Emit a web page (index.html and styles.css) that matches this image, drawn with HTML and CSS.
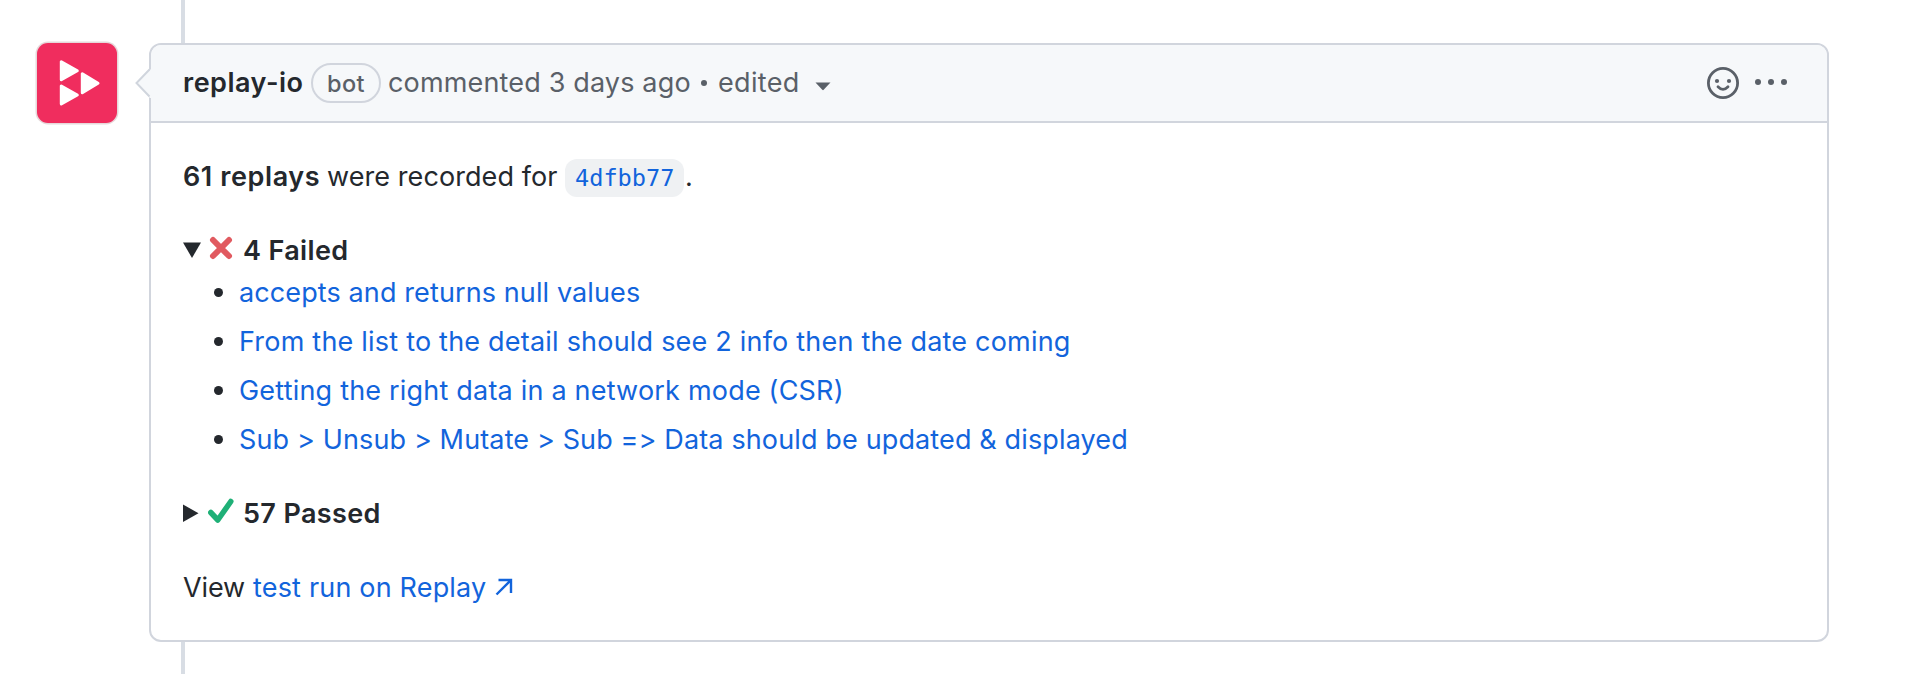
FILE: index.html
```html
<!DOCTYPE html>
<html lang="en">
<head>
<meta charset="utf-8">
<title>replay-io comment</title>
<link rel="stylesheet" href="styles.css">
</head>
<body>
<main class="timeline">
  <svg class="avatar" viewBox="0 0 84 84" aria-label="replay-io">
    <rect x="0.500" y="0.500" width="83" height="83" rx="12.500" fill="#e6d8da"/>
    <rect x="2" y="2" width="80" height="80" rx="11" fill="#f02d5e"/>
    <g fill="#fff" stroke="#fff" stroke-width="3" stroke-linejoin="round">
      <path d="M26.300 20.800v18l16-9z"/>
      <path d="M26.300 45v18l16-9z"/>
      <path d="M47.300 32.800v19l15.700-9.500z"/>
    </g>
  </svg>
  <article class="comment">
    <svg class="pointer" viewBox="0 0 17 30"><path d="M17 0v30h-2L1.500 15.500 15 2z" fill="#f6f8fa"/><path d="M14.500 1.500L1.500 15l13 13.500" fill="none" stroke="#d0d5dd" stroke-width="2"/></svg>
    <header class="comment-header">
      <strong class="author">replay-io</strong>
      <span class="badge">bot</span>
      <span class="meta">commented 3 days ago</span>
      <span class="dot"></span>
      <span class="edited">edited</span>
      <svg class="caret" viewBox="0 0 16 9"><path d="M.5 .5h15L8.700 7.800q-.7.700-1.400 0z" fill="#5a6068"/></svg>
      <div class="actions">
        <svg class="smiley" viewBox="0 0 32 32"><circle cx="16" cy="16" r="14.600" fill="none" stroke="#5a6068" stroke-width="2.800"/><circle cx="10" cy="14" r="2.100" fill="#5a6068"/><circle cx="22" cy="14" r="2.100" fill="#5a6068"/><path d="M11 19.800q5 5.200 10 0" fill="none" stroke="#5a6068" stroke-width="2.800" stroke-linecap="round"/></svg>
        <svg class="kebab" viewBox="0 0 32 8"><g fill="#5a6068"><circle cx="3" cy="4" r="3"/><circle cx="16" cy="4" r="3"/><circle cx="29" cy="4" r="3"/></g></svg>
      </div>
    </header>
    <div class="comment-body">
      <p class="line"><strong class="count">61 replays</strong> <span class="recorded">were recorded for</span> <code class="sha">4dfbb77</code><span class="stop">.</span></p>
      <section class="group">
        <div class="summary">
          <svg class="tri" viewBox="0 0 18 18"><path d="M0 1.500h18L9 17z" fill="#24282d"/></svg>
          <svg class="mark" viewBox="0 0 26 26"><path d="M5 5l16 16M21 5L5 21" stroke="#e15a60" stroke-width="6" stroke-linecap="round"/></svg>
          <strong class="failed">4 Failed</strong>
        </div>
        <ul class="list">
          <li><a class="t1">accepts and returns null values</a></li>
          <li><a class="t2">From the list to the detail should see 2 info then the date coming</a></li>
          <li><a class="t3">Getting the right data in a network mode (CSR)</a></li>
          <li><a class="t4">Sub &gt; Unsub &gt; Mutate &gt; Sub =&gt; Data should be updated &amp; displayed</a></li>
        </ul>
      </section>
      <section class="group">
        <div class="summary">
          <svg class="tri" viewBox="0 0 18 18"><path d="M0 .500v17.500l15.500-8.800z" fill="#24282d"/></svg>
          <svg class="mark" viewBox="0 0 26 26"><path d="M2.800 14.500L9.800 22 22.800 3.500" stroke="#1fb077" stroke-width="5.500" fill="none" stroke-linecap="round" stroke-linejoin="round"/></svg>
          <strong class="passed">57 Passed</strong>
        </div>
      </section>
      <p class="line"><span class="view">View</span> <a class="run">test run on Replay</a><svg class="arrow" viewBox="0 0 18 18"><path d="M1.500 16.500L16 2M3.500 2H16v13" fill="none" stroke="#1264dc" stroke-width="2.400"/></svg></p>
    </div>
  </article>
</main>
</body>
</html>
```
FILE: styles.css
```css
* { box-sizing: border-box; }
body {
  margin: 0;
  background: #fff;
  color: #24282d;
  font: 27px/42px Inter, "Liberation Sans", sans-serif;
}
svg { display: block; flex: none; }
strong { font-weight: 600; }
a { color: #1264dc; }
.timeline {
  display: flex;
  align-items: flex-start;
  gap: 30px;
  height: 674px;
  padding: 43px 79px 0 35px;
  overflow: hidden;
  background: linear-gradient(#d8dde4, #d8dde4) 181px 0 / 4px 100% no-repeat;
}
.avatar { width: 84px; height: 84px; margin-top: -2px; }
.comment {
  position: relative;
  flex: 1;
  height: 599px;
  border: 2px solid #d1d5dd;
  border-radius: 12px;
  background: #fff;
}
.pointer { position: absolute; left: -16px; top: 23px; width: 17px; height: 30px; }
.comment-header {
  display: flex;
  align-items: center;
  height: 78px;
  padding: 0 40px 0 32px;
  border-bottom: 2px solid #d1d5dd;
  border-radius: 10px 10px 0 0;
  background: #f6f8fa;
  color: #5a6068;
  white-space: nowrap;
}
.author { width: 128px; color: #24282d; letter-spacing: 0.500px; }
.badge {
  width: 70px;
  height: 40px;
  border: 2px solid #d1d5dd;
  border-radius: 20px;
  font-size: 23.500px;
  font-weight: 500;
  line-height: 37px;
  text-align: center;
  letter-spacing: 0.500px;
}
.meta { width: 320px; padding-left: 7px; letter-spacing: 0.160px; }
.dot { width: 6px; height: 6px; border-radius: 50%; background: #5a6068; }
.edited { width: 108px; padding-left: 11px; letter-spacing: 0.350px; }
.caret { width: 16px; height: 9px; margin-top: 6px; }
.actions { display: flex; align-items: center; gap: 16px; margin-left: auto; }
.smiley { width: 32px; height: 32px; }
.kebab { width: 32px; height: 8px; margin-top: -2px; }
.comment-body { display: flex; flex-direction: column; gap: 32px; padding: 32px; }
.line { display: flex; align-items: center; height: 42px; margin: 0; white-space: nowrap; }
.line > span, .line > strong, .line > a, .summary > strong, .list a { padding-top: 2px; }
.count { width: 144px; letter-spacing: 0.600px; }
.recorded { width: 238px; letter-spacing: 0.080px; }
.sha {
  width: 119px;
  height: 38px;
  margin-top: 3px;
  padding-left: 10px;
  border-radius: 12px;
  background: #eff1f3;
  color: #1264dc;
  font: 23.600px/38px "DejaVu Sans Mono", monospace;
}
.stop { padding-left: 1px; }
.summary { display: flex; align-items: center; height: 42px; white-space: nowrap; }
.tri { width: 18px; height: 18px; }
.mark { width: 26px; height: 26px; margin: -5px 9px 0 7px; }
.failed, .passed { letter-spacing: 0.350px; }
.list { display: flex; flex-direction: column; gap: 7px; margin: 0; padding: 0; list-style: none; }
.list li { display: flex; align-items: center; height: 42px; padding-left: 31px; white-space: nowrap; }
.list li::before { content: ""; width: 9px; height: 9px; margin-right: 16px; border-radius: 50%; background: #24282d; }
.t1 { letter-spacing: 0.110px; }
.t2 { letter-spacing: 0.210px; }
.t3 { letter-spacing: 0.200px; }
.t4 { letter-spacing: 0.135px; }
.view { width: 70px; letter-spacing: -0.100px; }
.run { width: 242px; letter-spacing: 0.180px; }
.arrow { width: 18px; height: 18px; margin-top: 0; }
```
